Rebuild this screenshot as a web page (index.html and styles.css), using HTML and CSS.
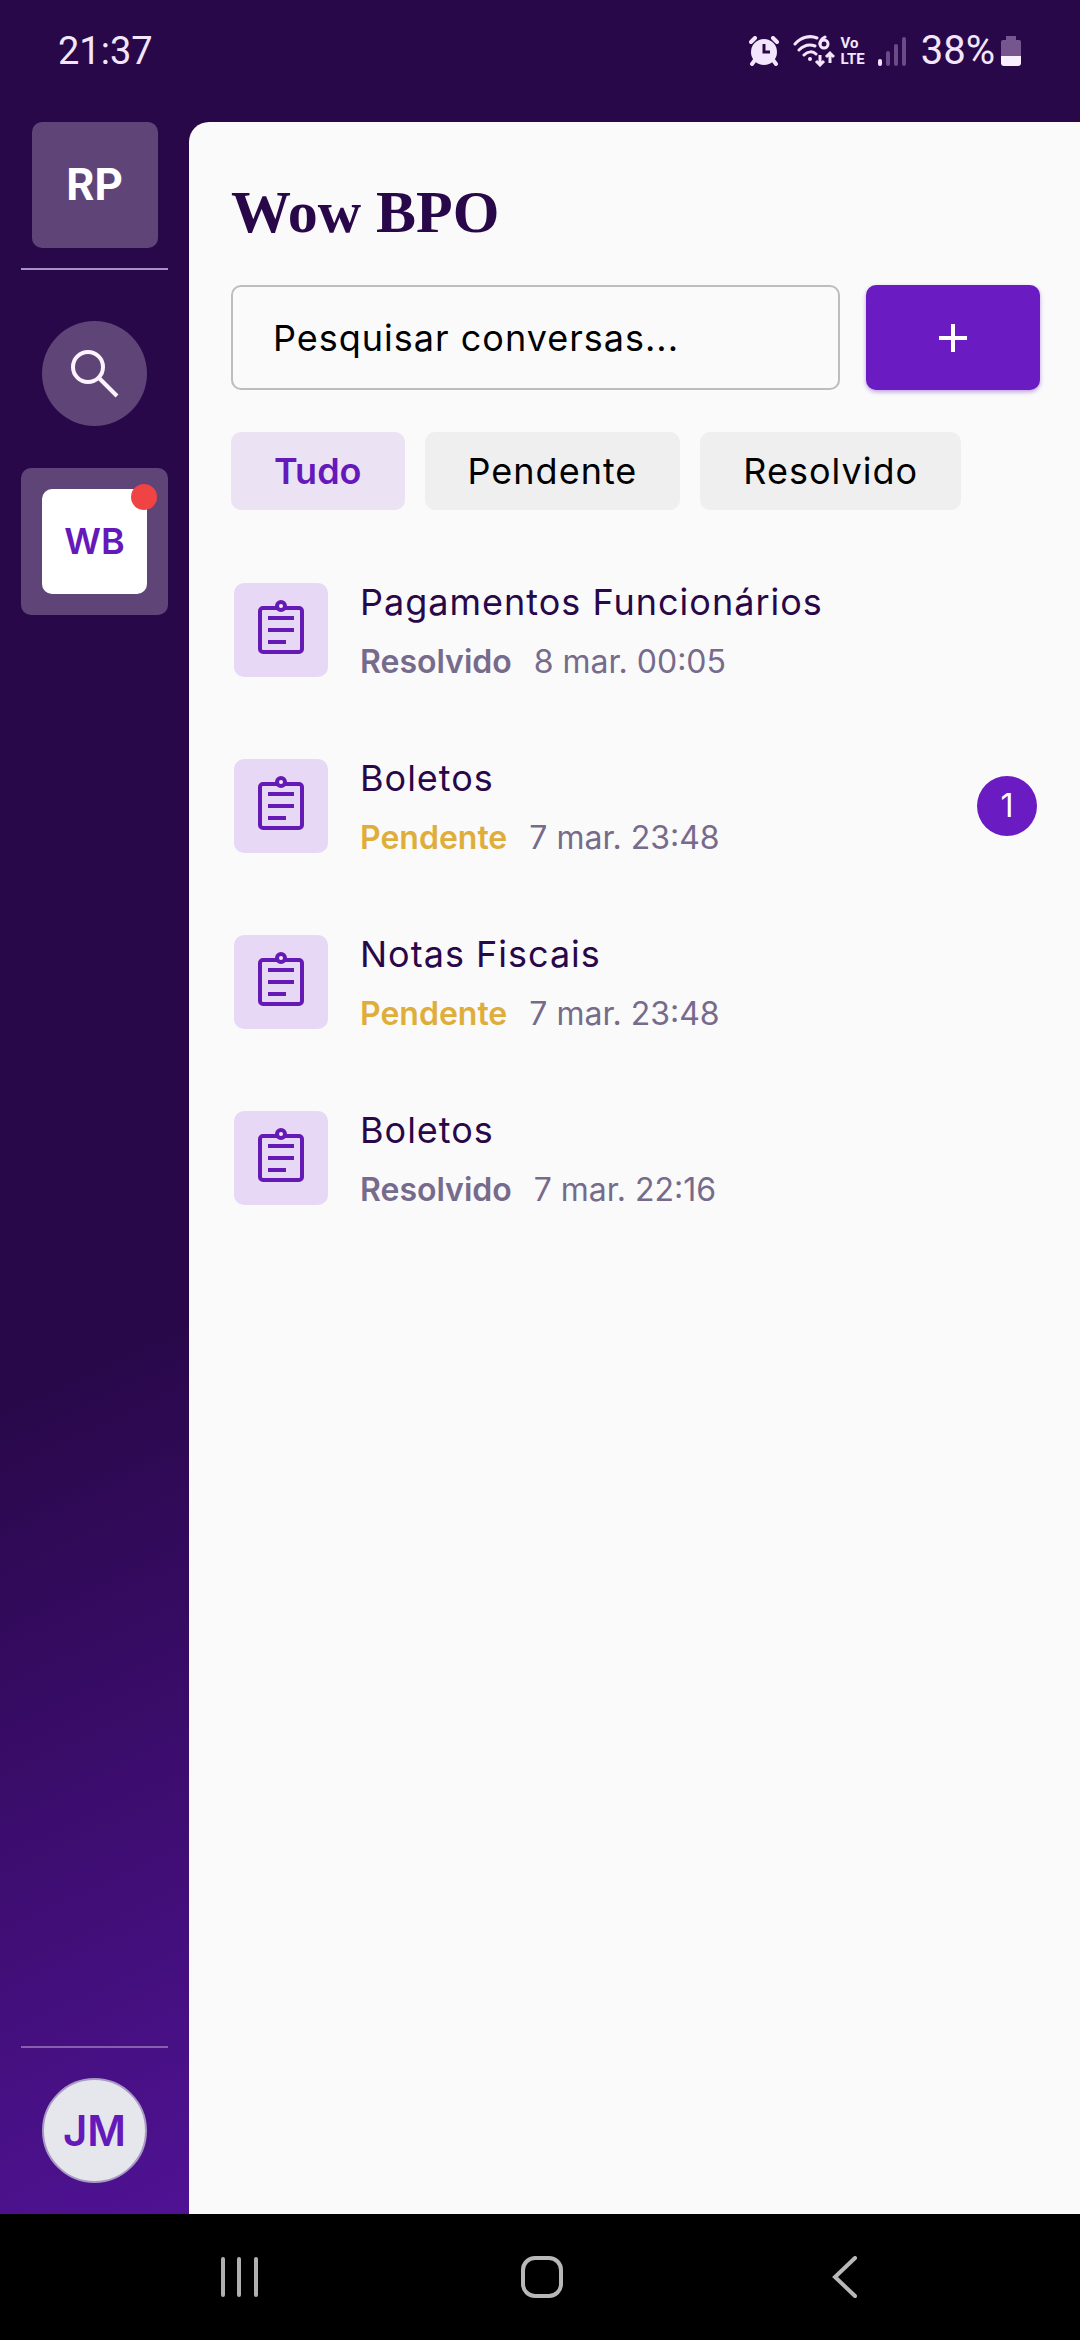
FILE: index.html
```html
<!DOCTYPE html>
<html lang="pt-BR">
<head>
<meta charset="utf-8">
<meta name="viewport" content="width=device-width, initial-scale=1">
<title>Wow BPO</title>
<link rel="stylesheet" href="styles.css">
</head>
<body>
<svg class="sprite" aria-hidden="true">
  <symbol id="task" viewBox="0 0 48 60">
    <rect x="3" y="8" width="42" height="44" rx="3" fill="none" stroke="currentColor" stroke-width="4"/>
    <circle cx="24" cy="6" r="4" fill="#f6eefc" stroke="currentColor" stroke-width="4"/>
    <path d="M11 18h26M11 30h26M11 42h18" fill="none" stroke="currentColor" stroke-width="4"/>
  </symbol>
</svg>
<div class="app">
  <header class="status">
    <span class="clock">21:37</span>
    <div class="indicators">
      <svg class="alarm" width="30" height="30" viewBox="0 0 30 30" aria-hidden="true">
        <path d="M2 6l4-4M28 6l-4-4" stroke="#f3e6fc" stroke-width="4" stroke-linecap="round"/>
        <path d="M6 24l-3 4M24 24l3 4" stroke="#f3e6fc" stroke-width="4" stroke-linecap="round"/>
        <circle cx="15" cy="16" r="13" fill="#f3e6fc"/>
        <path d="M15 8v8h6" fill="none" stroke="#29084a" stroke-width="3"/>
      </svg>
      <svg class="wifi" width="42" height="32" viewBox="0 0 42 32" aria-hidden="true">
        <path d="M2 9C8 2 17 0 24 3M6 15c5-5 11-6 16-4M11 20c4-4 9-4 12-1" fill="none" stroke="#f3e6fc" stroke-width="3" stroke-linecap="round"/>
        <circle cx="17" cy="24" r="2" fill="#f3e6fc"/>
        <path d="M32 2c-4 2-5 5-5 7" fill="none" stroke="#f3e6fc" stroke-width="3" stroke-linecap="round"/>
        <circle cx="31" cy="9" r="4" fill="none" stroke="#f3e6fc" stroke-width="3"/>
        <path d="M27 20v10M23 26l4 4 4-4M37 28V18M33 22l4-4 4 4" fill="none" stroke="#f3e6fc" stroke-width="3"/>
      </svg>
      <span class="volte">Vo<br>LTE</span>
      <svg class="signal" width="30" height="30" viewBox="0 0 30 30" aria-hidden="true">
        <path d="M3 25v3" stroke="#f3e6fc" stroke-width="4" stroke-linecap="round"/>
        <path d="M11 17v11M19 10v18M27 3v25" stroke="#6c4a87" stroke-width="4" stroke-linecap="round"/>
      </svg>
      <span class="percent">38%</span>
      <svg class="battery" width="22" height="32" viewBox="0 0 22 32" aria-hidden="true">
        <path d="M6 1h10v4h3q2 0 2 2v14H1V7q0-2 2-2h3z" fill="#775690"/>
        <path d="M1 21h20v7q0 3-3 3H4q-3 0-3-3z" fill="#f9effe"/>
      </svg>
    </div>
  </header>
  <div class="body">
    <nav class="rail" aria-label="Espaços">
      <button class="org" type="button">RP</button>
      <hr class="rule">
      <button class="search" type="button" aria-label="Pesquisar">
        <svg width="50" height="50" viewBox="0 0 50 50" aria-hidden="true">
          <circle cx="18" cy="18" r="15" fill="none" stroke="#fdf3ff" stroke-width="4"/>
          <path d="M29 29l18 18" stroke="#fdf3ff" stroke-width="4"/>
        </svg>
      </button>
      <button class="space" type="button" aria-current="true">
        <span class="space-tile">WB<span class="dot"></span></span>
      </button>
      <hr class="rule rule-low">
      <button class="user" type="button">JM</button>
    </nav>
    <main class="panel">
      <h1 class="title">Wow BPO</h1>
      <form class="tools">
        <input class="field" type="text" placeholder="Pesquisar conversas..." aria-label="Pesquisar conversas">
        <button class="add" type="button" aria-label="Nova conversa">
          <svg width="28" height="28" viewBox="0 0 28 28" aria-hidden="true"><path d="M14 0v28M0 14h28" stroke="#fff" stroke-width="4"/></svg>
        </button>
      </form>
      <div class="filters">
        <button class="chip chip-on" type="button">Tudo</button>
        <button class="chip" type="button">Pendente</button>
        <button class="chip" type="button">Resolvido</button>
      </div>
      <ul class="list">
        <li class="row">
          <span class="tile"><svg class="task" aria-hidden="true"><use href="#task"/></svg></span>
          <div class="text">
            <a class="name" href="#">Pagamentos Funcionários</a>
            <p class="meta"><b class="state">Resolvido</b><span>8 mar. 00:05</span></p>
          </div>
        </li>
        <li class="row">
          <span class="tile"><svg class="task" aria-hidden="true"><use href="#task"/></svg></span>
          <div class="text">
            <a class="name" href="#">Boletos</a>
            <p class="meta"><b class="state pending">Pendente</b><span>7 mar. 23:48</span></p>
          </div>
          <span class="count">1</span>
        </li>
        <li class="row">
          <span class="tile"><svg class="task" aria-hidden="true"><use href="#task"/></svg></span>
          <div class="text">
            <a class="name" href="#">Notas Fiscais</a>
            <p class="meta"><b class="state pending">Pendente</b><span>7 mar. 23:48</span></p>
          </div>
        </li>
        <li class="row">
          <span class="tile"><svg class="task" aria-hidden="true"><use href="#task"/></svg></span>
          <div class="text">
            <a class="name" href="#">Boletos</a>
            <p class="meta"><b class="state">Resolvido</b><span>7 mar. 22:16</span></p>
          </div>
        </li>
      </ul>
    </main>
  </div>
  <footer class="keys">
    <button class="key" type="button" aria-label="Recentes">
      <svg width="42" height="42" viewBox="0 0 42 42" aria-hidden="true"><path d="M5 3v36M21 3v36M38 3v36" stroke="#b0b0b0" stroke-width="4" stroke-linecap="round"/></svg>
    </button>
    <button class="key" type="button" aria-label="Início">
      <svg width="42" height="42" viewBox="0 0 42 42" aria-hidden="true"><rect x="2" y="2" width="38" height="38" rx="12" fill="none" stroke="#b8b8b8" stroke-width="4"/></svg>
    </button>
    <button class="key" type="button" aria-label="Voltar">
      <svg width="42" height="42" viewBox="0 0 42 42" aria-hidden="true"><path d="M31 2L11 21l20 19" fill="none" stroke="#b8b8b8" stroke-width="4" stroke-linecap="round"/></svg>
    </button>
  </footer>
</div>
</body>
</html>
```
FILE: styles.css
```css
* {
  box-sizing: border-box;
}

body {
  margin: 0;
  font-family: Inter, "Liberation Sans", sans-serif;
  font-size: 36px;
  color: #000;
  background: #29084a;
}

button {
  margin: 0;
  padding: 0;
  border: 0;
  font: inherit;
  color: inherit;
  background: none;
}

svg {
  display: block;
  flex: none;
}

.sprite {
  display: none;
}

.app {
  display: flex;
  flex-direction: column;
  min-height: 100vh;
  background: #29084a linear-gradient(155deg, #29084a 58%, #53139a 98%) no-repeat left / 189px 100%;
}

/* System status bar */
.status {
  display: flex;
  justify-content: space-between;
  align-items: center;
  height: 122px;
  padding: 0 58px 20px;
  font-family: Roboto, "Noto Sans", sans-serif;
  font-size: 38px;
  line-height: 44px;
  color: #f3e6fc;
}

.indicators {
  display: flex;
  align-items: center;
}

.wifi {
  margin-left: 14px;
}

.volte {
  margin-left: 6px;
  font-size: 15px;
  font-weight: 700;
  line-height: 16px;
}

.signal {
  margin: 0 14px 0 12px;
}

.percent {
  font-size: 40px;
}

.battery {
  margin-left: 5px;
}

.body {
  display: flex;
  flex: 1;
}

/* Left rail */
.rail {
  display: flex;
  flex-direction: column;
  align-items: center;
  width: 189px;
  padding: 0 21px 31px;
}

.org {
  width: 126px;
  height: 126px;
  border-radius: 10px;
  font-family: Roboto, sans-serif;
  font-size: 44px;
  font-weight: 700;
  color: #fff;
  background: #5f4577;
}

.rule {
  width: 100%;
  height: 2px;
  margin: 20px 0 51px;
  border: 0;
  background: #a890c8;
}

.rule-low {
  margin: auto 0 30px;
  background: #8560ad;
}

.search,
.user {
  display: flex;
  align-items: center;
  justify-content: center;
  width: 105px;
  height: 105px;
  border-radius: 50%;
}

.search {
  background: #5f4577;
}

.user {
  border: 2px solid #a99bc4;
  font-size: 42px;
  font-weight: 600;
  color: #6519bb;
  background: #e6e7ec;
}

.space {
  display: flex;
  justify-content: center;
  align-items: center;
  width: 147px;
  height: 147px;
  margin-top: 42px;
  border-radius: 10px;
  background: #5f4577;
}

.space-tile {
  position: relative;
  width: 105px;
  border-radius: 10px;
  font-weight: 600;
  line-height: 105px;
  color: #6519bb;
  background: #fff;
}

.dot {
  position: absolute;
  top: -5px;
  right: -10px;
  width: 26px;
  height: 26px;
  border-radius: 50%;
  background: #f04343;
}

/* Conversation panel */
.panel {
  flex: 1;
  min-width: 0;
  padding: 54px 40px 40px 42px;
  border-top-left-radius: 20px;
  background: #fafafa;
}

.title {
  margin: 0 0 37px;
  font-family: "Liberation Serif", serif;
  font-size: 60px;
  font-weight: 700;
  line-height: 72px;
  color: #29084a;
}

.tools {
  display: flex;
  gap: 26px;
  margin-bottom: 42px;
}

.field {
  flex: 1;
  min-width: 0;
  height: 105px;
  padding: 0 40px;
  border: 2px solid #bdbdbd;
  border-radius: 10px;
  font: inherit;
  letter-spacing: 1px;
  background: #fafafa;
}

.field::placeholder {
  color: #000;
  opacity: 1;
}

.add {
  display: flex;
  align-items: center;
  justify-content: center;
  width: 174px;
  border-radius: 10px;
  background: #6a1bc2;
  box-shadow: 0 2px 4px #6a1bc266;
}

.filters {
  display: flex;
  gap: 20px;
  margin-bottom: 62px;
}

.chip {
  height: 78px;
  padding: 0 43px;
  border-radius: 10px;
  letter-spacing: 1px;
  background: #efefef;
}

.chip-on {
  font-weight: 600;
  letter-spacing: normal;
  color: #6519bb;
  background: #ebe2f4;
}

.list {
  display: grid;
  gap: 60px;
  margin: 0;
  padding: 0;
  list-style: none;
}

.row {
  display: flex;
  align-items: center;
  gap: 32px;
  padding: 0 3px;
}

.tile {
  display: flex;
  align-items: center;
  justify-content: center;
  width: 94px;
  height: 94px;
  border-radius: 10px;
  color: #651ab5;
  background: #e7d8f5;
}

.task {
  width: 48px;
  height: 60px;
}

.text {
  display: grid;
  flex: 1;
  gap: 6px;
  padding-top: 2px;
}

.name {
  line-height: 56px;
  letter-spacing: 1px;
  color: #29084a;
  text-decoration: none;
}

.meta {
  display: flex;
  gap: 22px;
  margin: 0;
  font-size: 32px;
  line-height: 52px;
  color: #776b8c;
}

.state {
  font-weight: 600;
}

.pending {
  color: #dfae3a;
}

.count {
  width: 60px;
  border-radius: 50%;
  font-size: 32px;
  line-height: 60px;
  text-align: center;
  color: #fff;
  background: #6a1bc2;
}

/* System navigation keys */
.keys {
  display: flex;
  height: 126px;
  padding: 0 84px 0 87px;
  background: #000;
}

.key {
  display: flex;
  flex: 1;
  align-items: center;
  justify-content: center;
}
```
